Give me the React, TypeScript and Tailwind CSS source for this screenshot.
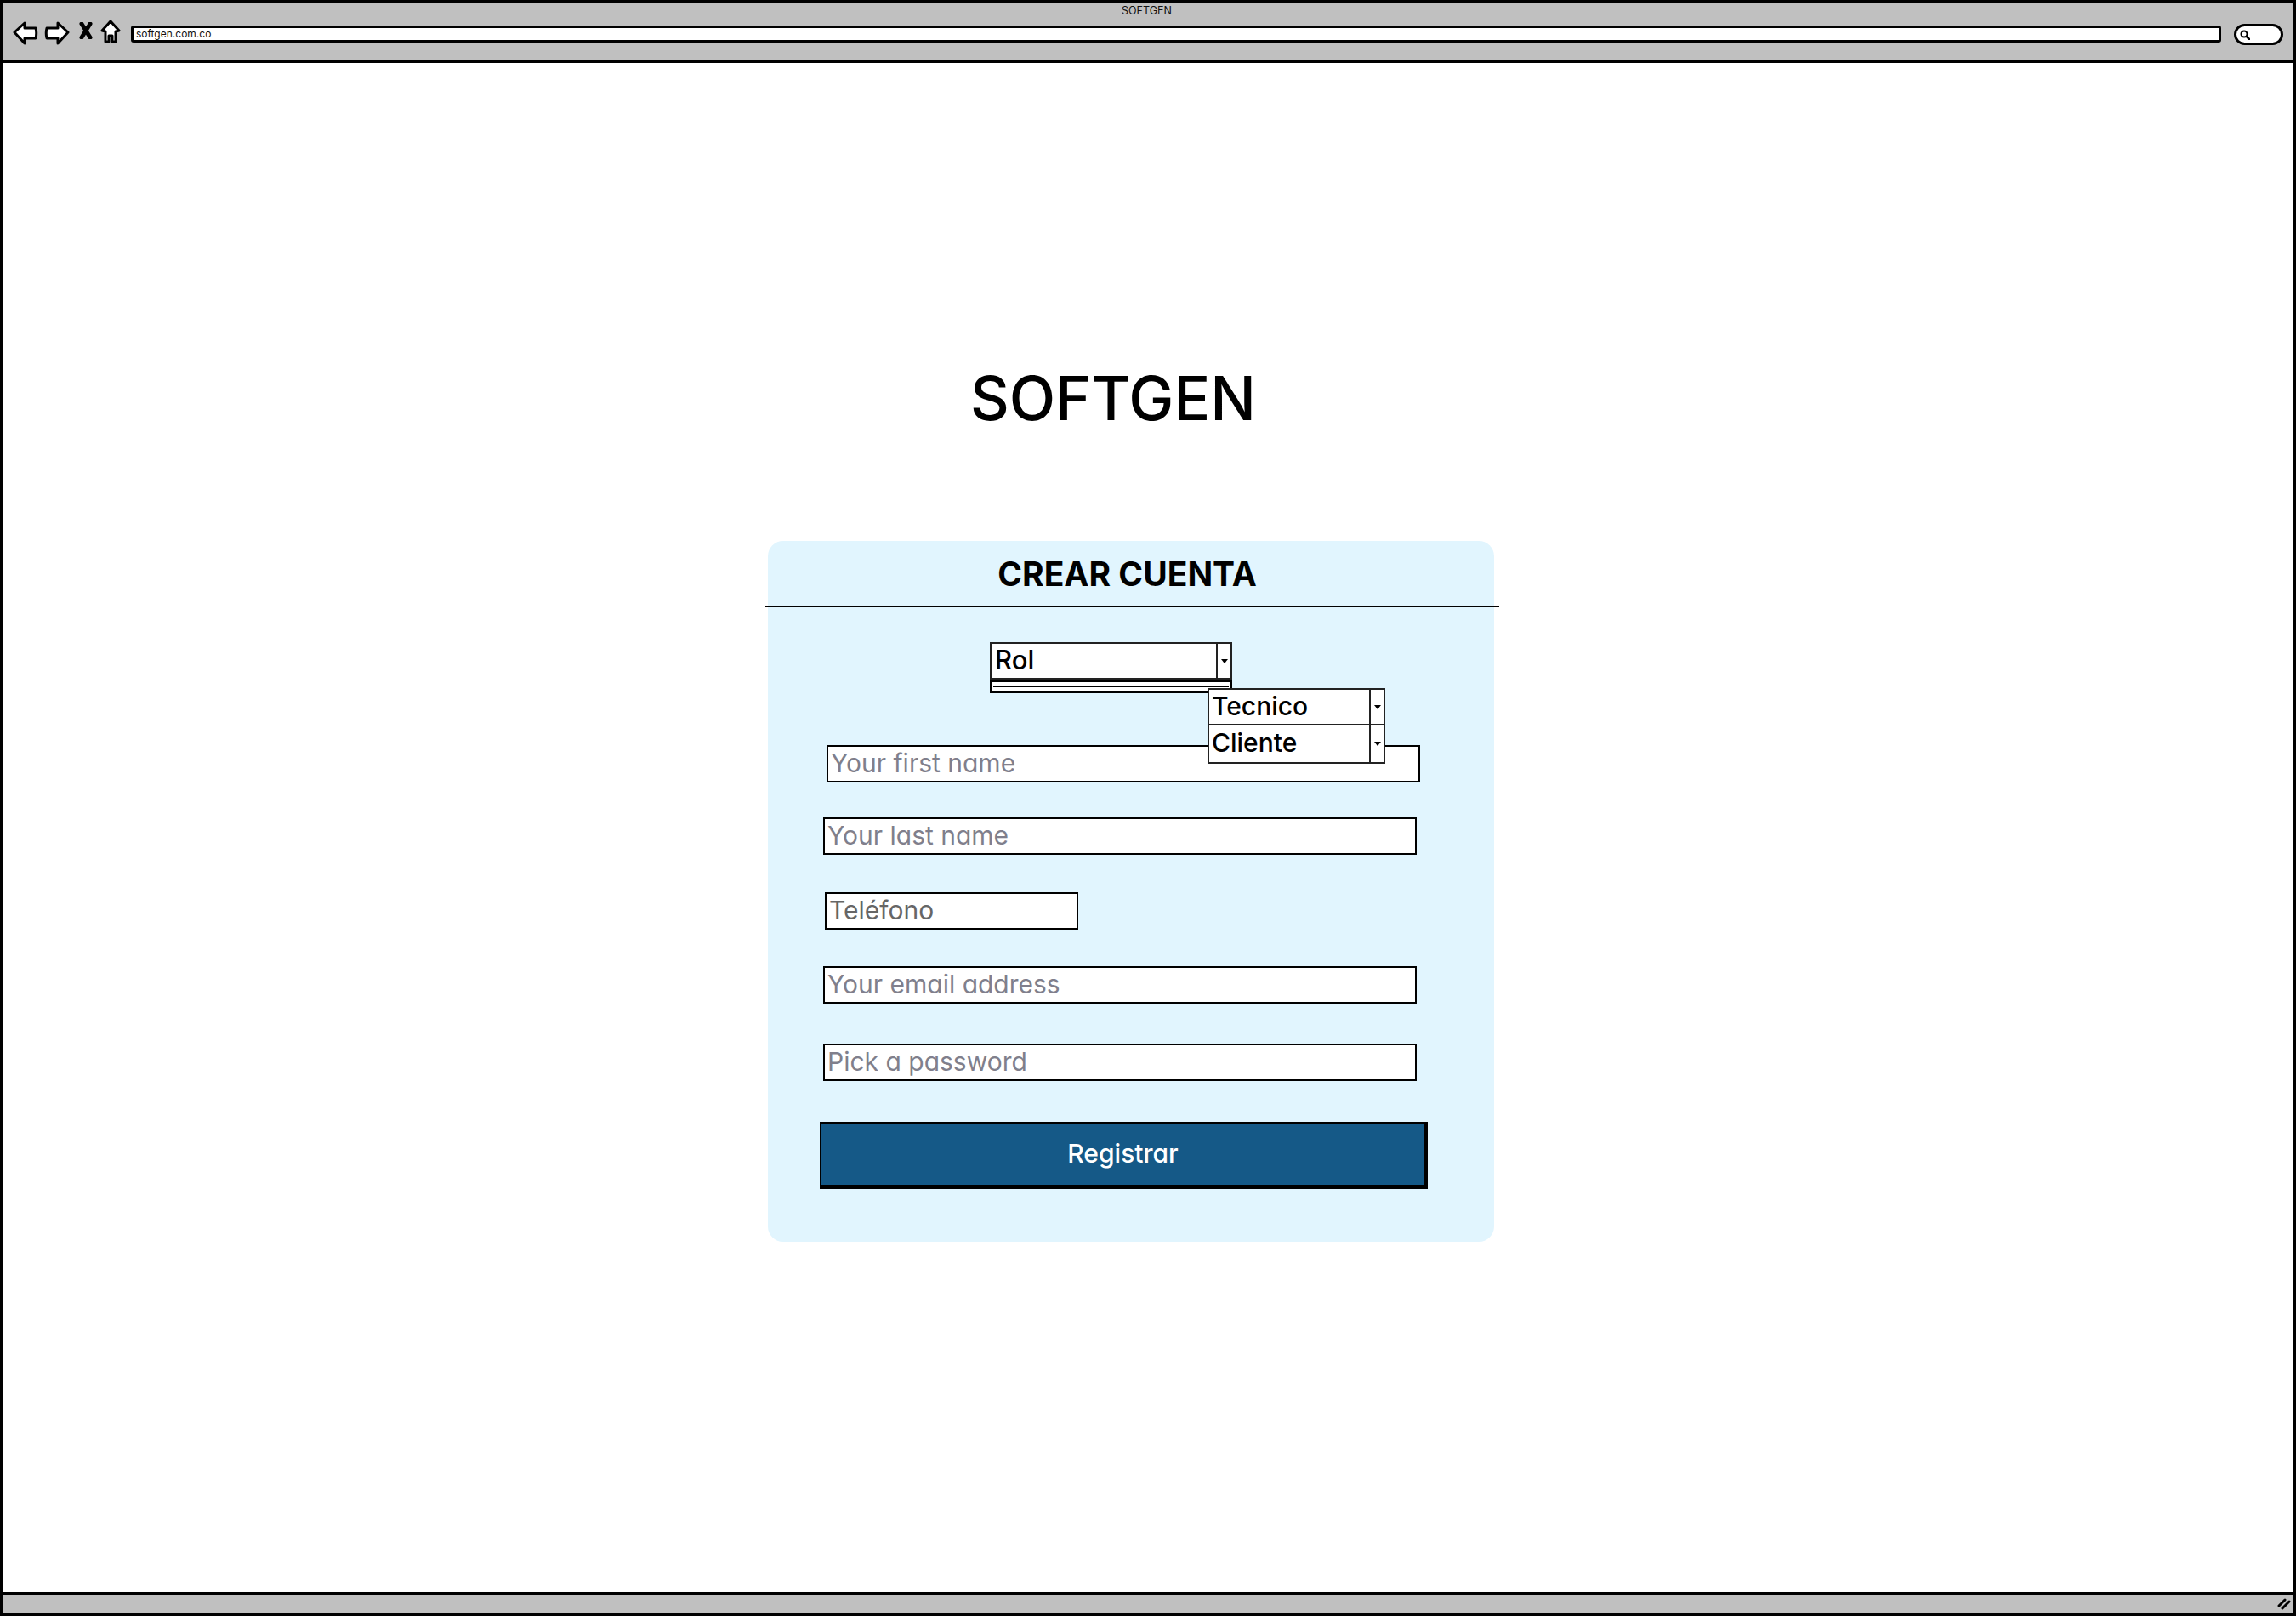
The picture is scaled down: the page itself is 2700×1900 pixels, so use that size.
import React from 'react';

const SelectArrow = () => (
  <div className="flex w-[17px] shrink-0 items-center justify-center border-l-2 border-[#222] bg-white">
    <div className="h-0 w-0 border-x-[4px] border-t-[5px] border-x-transparent border-t-black" />
  </div>
);

const NavIcons = () => (
  <div className="ml-[12px] mt-[20px] flex items-start">
    {/* back */}
    <svg width="30" height="28" viewBox="0 0 30 28" className="mt-[2px]">
      <path d="M2 13 L14 2 L14 8 L27 8 C28 12 28 16 27 20 L14 20 L14 26 Z" fill="white" stroke="black" strokeWidth="3" strokeLinejoin="round" />
    </svg>
    {/* forward */}
    <svg width="30" height="28" viewBox="0 0 30 28" className="ml-[7px] mt-[2px]">
      <path d="M28 13 L16 2 L16 8 L3 8 C2 12 2 16 3 20 L16 20 L16 26 Z" fill="white" stroke="black" strokeWidth="3" strokeLinejoin="round" />
    </svg>
    {/* stop */}
    <svg width="16" height="20" viewBox="0 0 16 20" className="ml-[11px] mt-[3px]">
      <path d="M3 2 L13 18 M13 2 L3 18" stroke="black" strokeWidth="5" strokeLinecap="round" />
    </svg>
    {/* home */}
    <svg width="24" height="28" viewBox="0 0 24 28" className="ml-[9px]">
      <path d="M12 2 L22 13 L18 14 L18 26 L14 26 L14 19 L10 19 L10 26 L6 26 L6 14 L2 13 Z" fill="white" stroke="black" strokeWidth="3" strokeLinejoin="round" />
    </svg>
  </div>
);

const TopBar = () => (
  <div className="relative h-[71px] shrink-0 border-b-[3px] border-black bg-[#c0c0c0]">
    <div className="absolute left-[1316px] top-[3px] text-[12.5px] leading-[14px] text-[#111]">SOFTGEN</div>
    <div className="flex items-start">
      <NavIcons />
      <div className="ml-[12px] mt-[27px] flex h-[20px] w-[2458px] items-center rounded-[3px] border-[3px] border-black bg-white pl-[3px] text-[12px] text-[#111]">
        softgen.com.co
      </div>
      <div className="ml-[15px] mt-[25px] flex h-[25px] w-[58px] items-center rounded-full border-[3px] border-black bg-white pl-[4px]">
        <svg width="12" height="12" viewBox="0 0 12 12">
          <circle cx="5" cy="5" r="3.5" fill="white" stroke="black" strokeWidth="2" />
          <path d="M8 8 L11 11" stroke="black" strokeWidth="2.5" strokeLinecap="round" />
        </svg>
      </div>
    </div>
  </div>
);

const BottomBar = () => (
  <div className="flex h-[25px] shrink-0 items-center justify-end border-t-[3px] border-black bg-[#c0c0c0] pr-[3px]">
    <svg width="16" height="14" viewBox="0 0 16 14">
      <path d="M2 9 L9 2 M6 12 L14 4" stroke="black" strokeWidth="3" strokeLinecap="round" />
    </svg>
  </div>
);

export default function App() {
  const field = 'flex h-[44px] items-center border-2 border-black bg-white pb-[3px] pl-[3px] text-[30px] leading-none';

  return (
    <div className="flex h-[1900px] w-[2700px] flex-col overflow-hidden border-[3px] border-black bg-white font-['Inter',sans-serif] [font-feature-settings:'cv11']">
      <TopBar />

      <main className="flex-1">
        <h1 className="ml-[1138px] mt-[352px] h-[84px] text-[71px] font-medium leading-[84px] text-black">SOFTGEN</h1>

        <section className="ml-[900px] mt-[126px] h-[824px] w-[854px] rounded-[18px] bg-[#e1f5fe]">
          <div className="-ml-[3px] flex h-[78px] w-[863px] items-center justify-center border-b-2 border-black pr-[12px]">
            <h2 className="text-[39px] font-bold leading-none text-black">CREAR CUENTA</h2>
          </div>

          {/* selector de rol */}
          <div className="relative ml-[261px] mt-[41px] w-[285px]">
            <div className="flex h-[44px] border-2 border-[#222] bg-white">
              <div className="flex flex-1 items-center pb-[3px] pl-[4px] text-[31px] font-medium leading-none text-black">Rol</div>
              <SelectArrow />
            </div>
            <div className="flex h-[16px] items-center border-x-2 border-y-[3px] border-black bg-white px-[2px]">
              <div className="h-[2px] w-full bg-black" />
            </div>

            {/* opciones desplegadas */}
            <div className="absolute left-[256px] top-[54px] w-[209px] border-2 border-[#222] bg-white text-[30px] font-medium leading-none text-black">
              <div className="flex h-[42px] border-b-2 border-[#222]">
                <div className="flex flex-1 items-center pb-[3px] pl-[3px]">Tecnico</div>
                <SelectArrow />
              </div>
              <div className="flex h-[43px]">
                <div className="flex flex-1 items-center pb-[3px] pl-[3px]">Cliente</div>
                <SelectArrow />
              </div>
            </div>
          </div>

          <div className={`${field} ml-[69px] mt-[61px] w-[698px] text-[#807f8c]`}>Your first name</div>
          <div className={`${field} ml-[65px] mt-[41px] w-[698px] text-[#807f8c]`}>Your last name</div>
          <div className={`${field} ml-[67px] mt-[44px] w-[298px] text-[#666666]`}>Teléfono</div>
          <div className={`${field} ml-[65px] mt-[43px] w-[698px] text-[#807f8c]`}>Your email address</div>
          <div className={`${field} ml-[65px] mt-[47px] w-[698px] text-[#807f8c]`}>Pick a password</div>

          <button className="ml-[61px] mt-[48px] flex h-[79px] w-[715px] items-center justify-center border-2 border-b-[5px] border-r-[4px] border-black bg-[#155987] pb-[2px] text-[30px] font-medium leading-none text-white">
            Registrar
          </button>
        </section>
      </main>

      <BottomBar />
    </div>
  );
}
